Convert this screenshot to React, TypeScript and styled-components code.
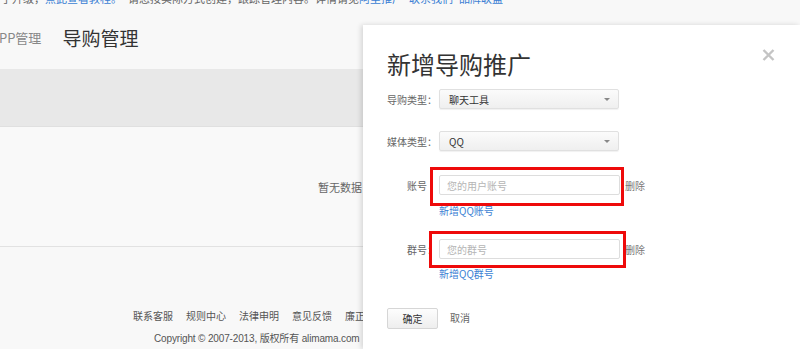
import React from "react";
import styled, { createGlobalStyle } from "styled-components";

const GlobalStyle = createGlobalStyle`
  html, body {
    margin: 0;
    padding: 0;
    background: #f8f8f8;
    overflow: hidden;
  }
  body {
    font-family: "Noto Sans CJK SC", "Liberation Sans", sans-serif;
    color: #333;
  }
`;

const Page = styled.div`
  position: relative;
  width: 800px;
  height: 349px;
  overflow: hidden;
`;

const Notice = styled.div`
  height: 6px;
  overflow: hidden;
  font-size: 11px;
  color: #666;
  white-space: nowrap;
  p {
    margin: -9px 0 0 -10px;
    line-height: 14px;
  }
`;

const NoticeLink = styled.a`
  color: #3b7fd4;
  text-decoration: none;
  margin-right: 6px;
`;

const Header = styled.div`
  display: flex;
  align-items: center;
  gap: 21px;
  height: 63px;
  margin-left: -9px;
`;

const NavItem = styled.span`
  font-size: 13px;
  color: #888;
`;

const PageTitle = styled.h1`
  margin: 0;
  font-size: 19px;
  font-weight: 400;
  color: #333;
`;

const Table = styled.div`
  width: 680px;
`;

const TableHead = styled.div`
  height: 57px;
  background: #e8e8e8;
  border-bottom: 1px solid #e0e0e0;
`;

const TableBody = styled.div`
  height: 119px;
  display: flex;
  align-items: center;
  justify-content: center;
  background: #f9f9f9;
  border-bottom: 1px solid #e2e2e2;
  font-size: 11px;
  color: #666;
`;

const Footer = styled.div`
  padding-top: 62px;
  font-size: 10px;
  line-height: 14px;
  color: #555;
`;

const FooterLinks = styled.div`
  display: flex;
  gap: 13px;
  padding-left: 133px;
  white-space: nowrap;
`;

const Copyright = styled.div`
  margin-top: 9px;
  padding-left: 154px;
  font-family: "Liberation Sans", "Noto Sans CJK SC", sans-serif;
  font-size: 10px;
  letter-spacing: -0.15px;
  white-space: nowrap;
`;

const Modal = styled.div`
  position: absolute;
  top: 25px;
  left: 363px;
  right: 0;
  bottom: 0;
  background: #fff;
  box-shadow: -2px 0 5px rgba(0, 0, 0, 0.14);
  padding: 23px 24px;
  box-sizing: border-box;
`;

const ModalTitle = styled.h2`
  margin: 0;
  font-size: 24px;
  line-height: 32px;
  font-weight: 400;
  color: #333;
`;

const Close = styled.button`
  position: absolute;
  top: 24px;
  right: 24px;
  width: 14px;
  height: 14px;
  padding: 0;
  border: 0;
  background: none;
  display: flex;
`;

const Field = styled.div<{ $top: number }>`
  position: relative;
  display: flex;
  align-items: center;
  height: 20px;
  margin-top: ${({ $top }) => $top}px;
  font-size: 10px;
`;

const Label = styled.span<{ $indent?: number }>`
  width: 52px;
  flex: none;
  padding-left: ${({ $indent }) => $indent || 0}px;
  box-sizing: border-box;
  color: #666;
  white-space: nowrap;
`;

const Select = styled.div`
  width: 180px;
  height: 20px;
  box-sizing: border-box;
  display: flex;
  align-items: center;
  justify-content: space-between;
  padding: 0 8px 0 9px;
  border: 1px solid #e0e0e0;
  border-radius: 2px;
  background: linear-gradient(#fbfbfb, #efefef);
  box-shadow: 0 1px 1px rgba(0, 0, 0, 0.06);
  color: #333;
  font-family: "Noto Sans CJK SC", "Liberation Sans", sans-serif;
`;

const Caret = styled.span`
  width: 0;
  height: 0;
  border-left: 3px solid transparent;
  border-right: 3px solid transparent;
  border-top: 3px solid #888;
`;

const Input = styled.input`
  width: 181px;
  height: 20px;
  box-sizing: border-box;
  padding: 0 7px;
  border: 1px solid #ddd;
  border-radius: 2px;
  font-family: "Noto Sans CJK SC", sans-serif;
  font-size: 10px;
  outline: none;
  &::placeholder {
    color: #b5b5b5;
  }
`;

const Remove = styled.span`
  margin-left: 5px;
  color: #777;
`;

const Mark = styled.div<{ $left: number; $width: number; $height: number }>`
  position: absolute;
  top: -8px;
  left: ${({ $left }) => $left}px;
  width: ${({ $width }) => $width}px;
  height: ${({ $height }) => $height}px;
  box-sizing: border-box;
  border: 3px solid #ee0a0a;
  pointer-events: none;
`;

const AddLink = styled.a<{ $top: number }>`
  display: block;
  margin: ${({ $top }) => $top}px 0 0 52px;
  font-size: 10px;
  line-height: 14px;
  color: #3b7fd4;
  text-decoration: none;
`;

const Actions = styled.div`
  display: flex;
  align-items: center;
  gap: 12px;
  margin-top: 27px;
  font-size: 10px;
`;

const Button = styled.button`
  width: 51px;
  height: 21px;
  padding: 0;
  border: 1px solid #d6d6d6;
  border-radius: 2px;
  background: linear-gradient(#fdfdfd, #eeeeee);
  font-family: "Noto Sans CJK SC", sans-serif;
  font-size: 10px;
  line-height: 19px;
  color: #333;
`;

const Cancel = styled.span`
  color: #666;
  margin-top: -3px;
`;

const footerLinks = ["联系客服", "规则中心", "法律申明", "意见反馈", "廉正举报", "友情链接"];

export default function App() {
  return (
    <Page>
      <GlobalStyle />
      <Notice>
        <p>
          行了升级，<NoticeLink>点此查看教程。</NoticeLink>请您按实际方式创建，跟踪管理内容。详情请见
          <NoticeLink>阿里推广</NoticeLink>
          <NoticeLink>联系我们</NoticeLink>
          <NoticeLink>品牌联盟</NoticeLink>
        </p>
      </Notice>
      <Header>
        <NavItem>APP管理</NavItem>
        <PageTitle>导购管理</PageTitle>
      </Header>
      <Table>
        <TableHead />
        <TableBody>暂无数据</TableBody>
      </Table>
      <Footer>
        <FooterLinks>
          {footerLinks.map((l) => (
            <span key={l}>{l}</span>
          ))}
        </FooterLinks>
        <Copyright>Copyright © 2007-2013, 版权所有 alimama.com</Copyright>
      </Footer>

      <Modal>
        <ModalTitle>新增导购推广</ModalTitle>
        <Close aria-label="关闭">
          <svg width="13" height="12" viewBox="0 0 13 12">
            <path d="M1.5 1 L11.5 11 M11.5 1 L1.5 11" stroke="#c4c4c4" strokeWidth="2.4" />
          </svg>
        </Close>
        <Field $top={9}>
          <Label>导购类型：</Label>
          <Select>
            聊天工具
            <Caret />
          </Select>
        </Field>
        <Field $top={22}>
          <Label>媒体类型：</Label>
          <Select>
            QQ
            <Caret />
          </Select>
        </Field>
        <Field $top={24}>
          <Label $indent={20}>账号</Label>
          <Input placeholder="您的用户账号" />
          <Remove>删除</Remove>
          <Mark $left={43} $width={194} $height={39} />
        </Field>
        <AddLink $top={9}>新增QQ账号</AddLink>
        <Field $top={21}>
          <Label $indent={20}>群号：</Label>
          <Input placeholder="您的群号" />
          <Remove>删除</Remove>
          <Mark $left={42} $width={197} $height={37} />
        </Field>
        <AddLink $top={8}>新增QQ群号</AddLink>
        <Actions>
          <Button>确定</Button>
          <Cancel>取消</Cancel>
        </Actions>
      </Modal>
    </Page>
  );
}
